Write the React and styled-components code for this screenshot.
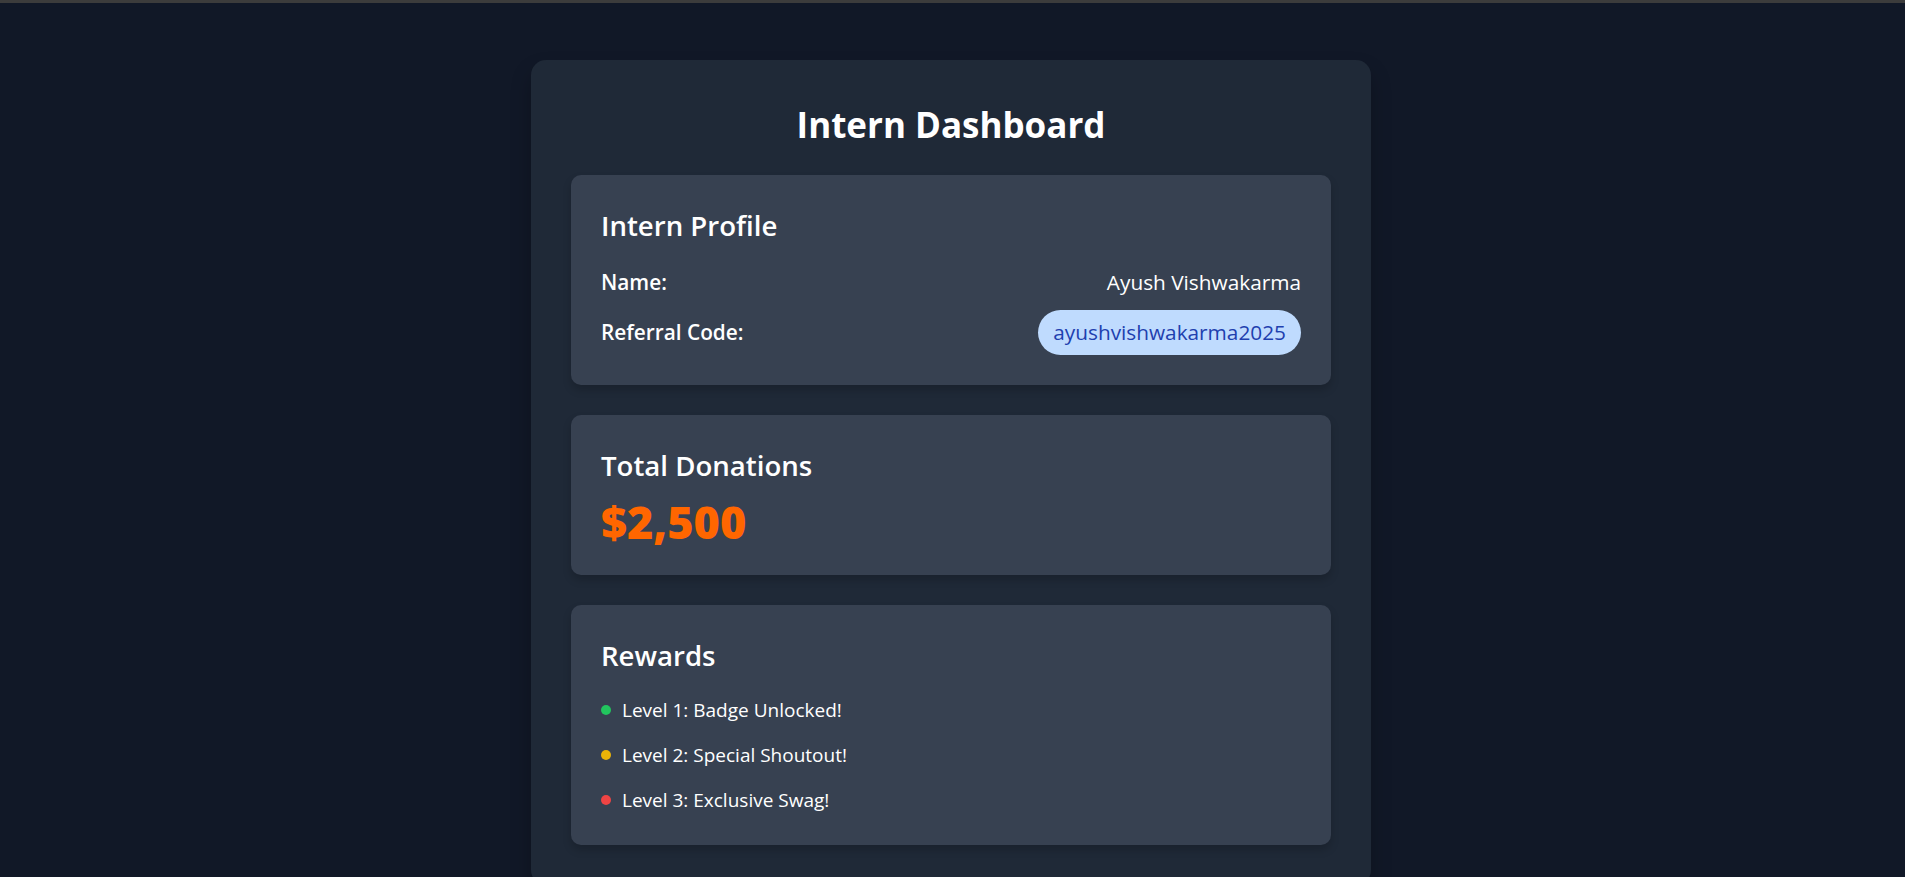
import React from "react";
import styled, { createGlobalStyle } from "styled-components";

const GlobalStyle = createGlobalStyle`
  * {
    box-sizing: border-box;
  }

  body {
    margin: 0;
    background: #111827;
    color: #ffffff;
    font-family: "Open Sans", "Noto Sans", "Liberation Sans", sans-serif;
  }
`;

const WindowEdge = styled.div`
  position: fixed;
  top: 0;
  left: 0;
  right: 0;
  height: 3px;
  background: #3c3c3c;
`;

const Page = styled.main`
  min-height: 100vh;
  padding: 60px 3px 60px 0;
  display: flex;
  justify-content: center;
  align-items: flex-start;
`;

const Panel = styled.section`
  width: 840px;
  padding: 40px;
  background: #1f2937;
  border-radius: 15px;
  box-shadow: 0 12px 20px rgba(0, 0, 0, 0.25);
  display: flex;
  flex-direction: column;
  gap: 30px;
`;

const Title = styled.h1`
  margin: 0;
  padding-top: 4px;
  text-align: center;
  font-size: 35px;
  line-height: 41px;
  font-weight: 700;
`;

const Card = styled.div`
  padding: 30px;
  background: #374151;
  border-radius: 10px;
  box-shadow: 0 5px 8px rgba(0, 0, 0, 0.18);
`;

const CardTitle = styled.h2`
  margin: 0 0 ${(props) => props.$gap || 20}px;
  font-size: 27.6px;
  line-height: 40px;
  font-weight: 600;
`;

const Rows = styled.div`
  display: flex;
  flex-direction: column;
  gap: 10px;
`;

const Row = styled.div`
  display: flex;
  justify-content: space-between;
  align-items: center;
  font-size: 20.8px;
  line-height: 35px;
`;

const Label = styled.span`
  font-weight: 600;
`;

const Code = styled.span`
  padding: 5px 15px;
  border-radius: 9999px;
  background: #bfdbfe;
  color: #1e40af;
`;

const Amount = styled.p`
  margin: 0;
  padding-top: 3px;
  font-size: 45px;
  line-height: 47px;
  font-weight: 800;
  color: #ff6600;
`;

const RewardList = styled.ul`
  margin: 0;
  padding: 0;
  list-style: none;
  display: flex;
  flex-direction: column;
  gap: 15px;
`;

const Reward = styled.li`
  display: flex;
  align-items: center;
  font-size: 19px;
  line-height: 30px;

  &::before {
    content: "";
    width: 10px;
    height: 10px;
    margin-right: 11px;
    border-radius: 50%;
    background: ${(props) => props.$dot};
  }
`;

const rewards = [
  { text: "Level 1: Badge Unlocked!", dot: "#22c55e" },
  { text: "Level 2: Special Shoutout!", dot: "#eab308" },
  { text: "Level 3: Exclusive Swag!", dot: "#ef4444" },
];

const App = () => {
  return (
    <>
      <GlobalStyle />
      <WindowEdge />
      <Page>
        <Panel>
          <Title>Intern Dashboard</Title>

          <Card>
            <CardTitle>Intern Profile</CardTitle>
            <Rows>
              <Row>
                <Label>Name:</Label>
                <span>Ayush Vishwakarma</span>
              </Row>
              <Row>
                <Label>Referral Code:</Label>
                <Code>ayushvishwakarma2025</Code>
              </Row>
            </Rows>
          </Card>

          <Card>
            <CardTitle $gap={10}>Total Donations</CardTitle>
            <Amount>$2,500</Amount>
          </Card>

          <Card>
            <CardTitle>Rewards</CardTitle>
            <RewardList>
              {rewards.map((r) => (
                <Reward key={r.text} $dot={r.dot}>
                  {r.text}
                </Reward>
              ))}
            </RewardList>
          </Card>
        </Panel>
      </Page>
    </>
  );
};

export default App;
